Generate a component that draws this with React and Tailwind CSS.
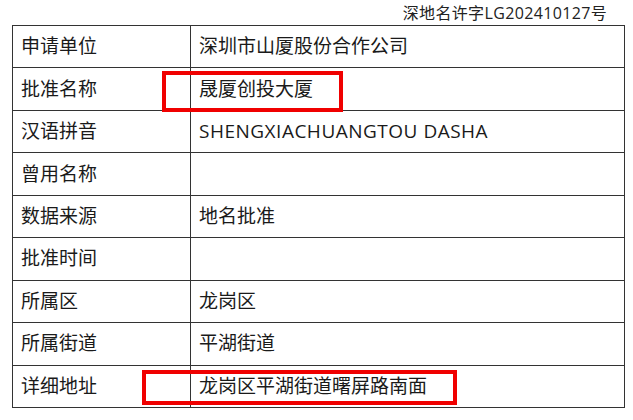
import React from "react";

const rows = [
  ["申请单位", "深圳市山厦股份合作公司"],
  ["批准名称", "晟厦创投大厦"],
  ["汉语拼音", "SHENGXIACHUANGTOU DASHA"],
  ["曾用名称", ""],
  ["数据来源", "地名批准"],
  ["批准时间", ""],
  ["所属区", "龙岗区"],
  ["所属街道", "平湖街道"],
  ["详细地址", "龙岗区平湖街道曙屏路南面"],
];

export default function App() {
  return (
    <div
      className="relative w-[633px] h-[420px] bg-white text-[#1a1a1a] overflow-hidden"
      style={{ fontFamily: '"Open Sans", "Noto Sans CJK SC", sans-serif' }}
    >
      <div className="h-[25px] flex items-center justify-end pr-[26px] text-[16px] tracking-[0.35px] leading-none text-[#222]">
        深地名许字LG202410127号
      </div>
      <div className="ml-[12px] w-[613px] h-[383px] border border-[#333] flex flex-col">
        {rows.map(([k, v], i) => (
          <div
            key={i}
            className={
              "flex-1 flex items-center text-[19px] leading-none " +
              (i > 0 ? "border-t border-[#333]" : "")
            }
          >
            <div className="w-[178px] h-full flex items-center pl-[8px] border-r border-[#333]">
              {k}
            </div>
            <div
              className={
                "flex-1 h-full flex items-center pl-[8px] " +
                (i === 2 ? "tracking-[0.5px]" : "")
              }
            >
              {v}
            </div>
          </div>
        ))}
      </div>
      <div className="absolute left-[162px] top-[71px] w-[181px] h-[41px] border-[4px] border-[#f00000]" />
      <div className="absolute left-[142px] top-[370px] w-[315px] h-[35px] border-[4px] border-[#f00000]" />
    </div>
  );
}
